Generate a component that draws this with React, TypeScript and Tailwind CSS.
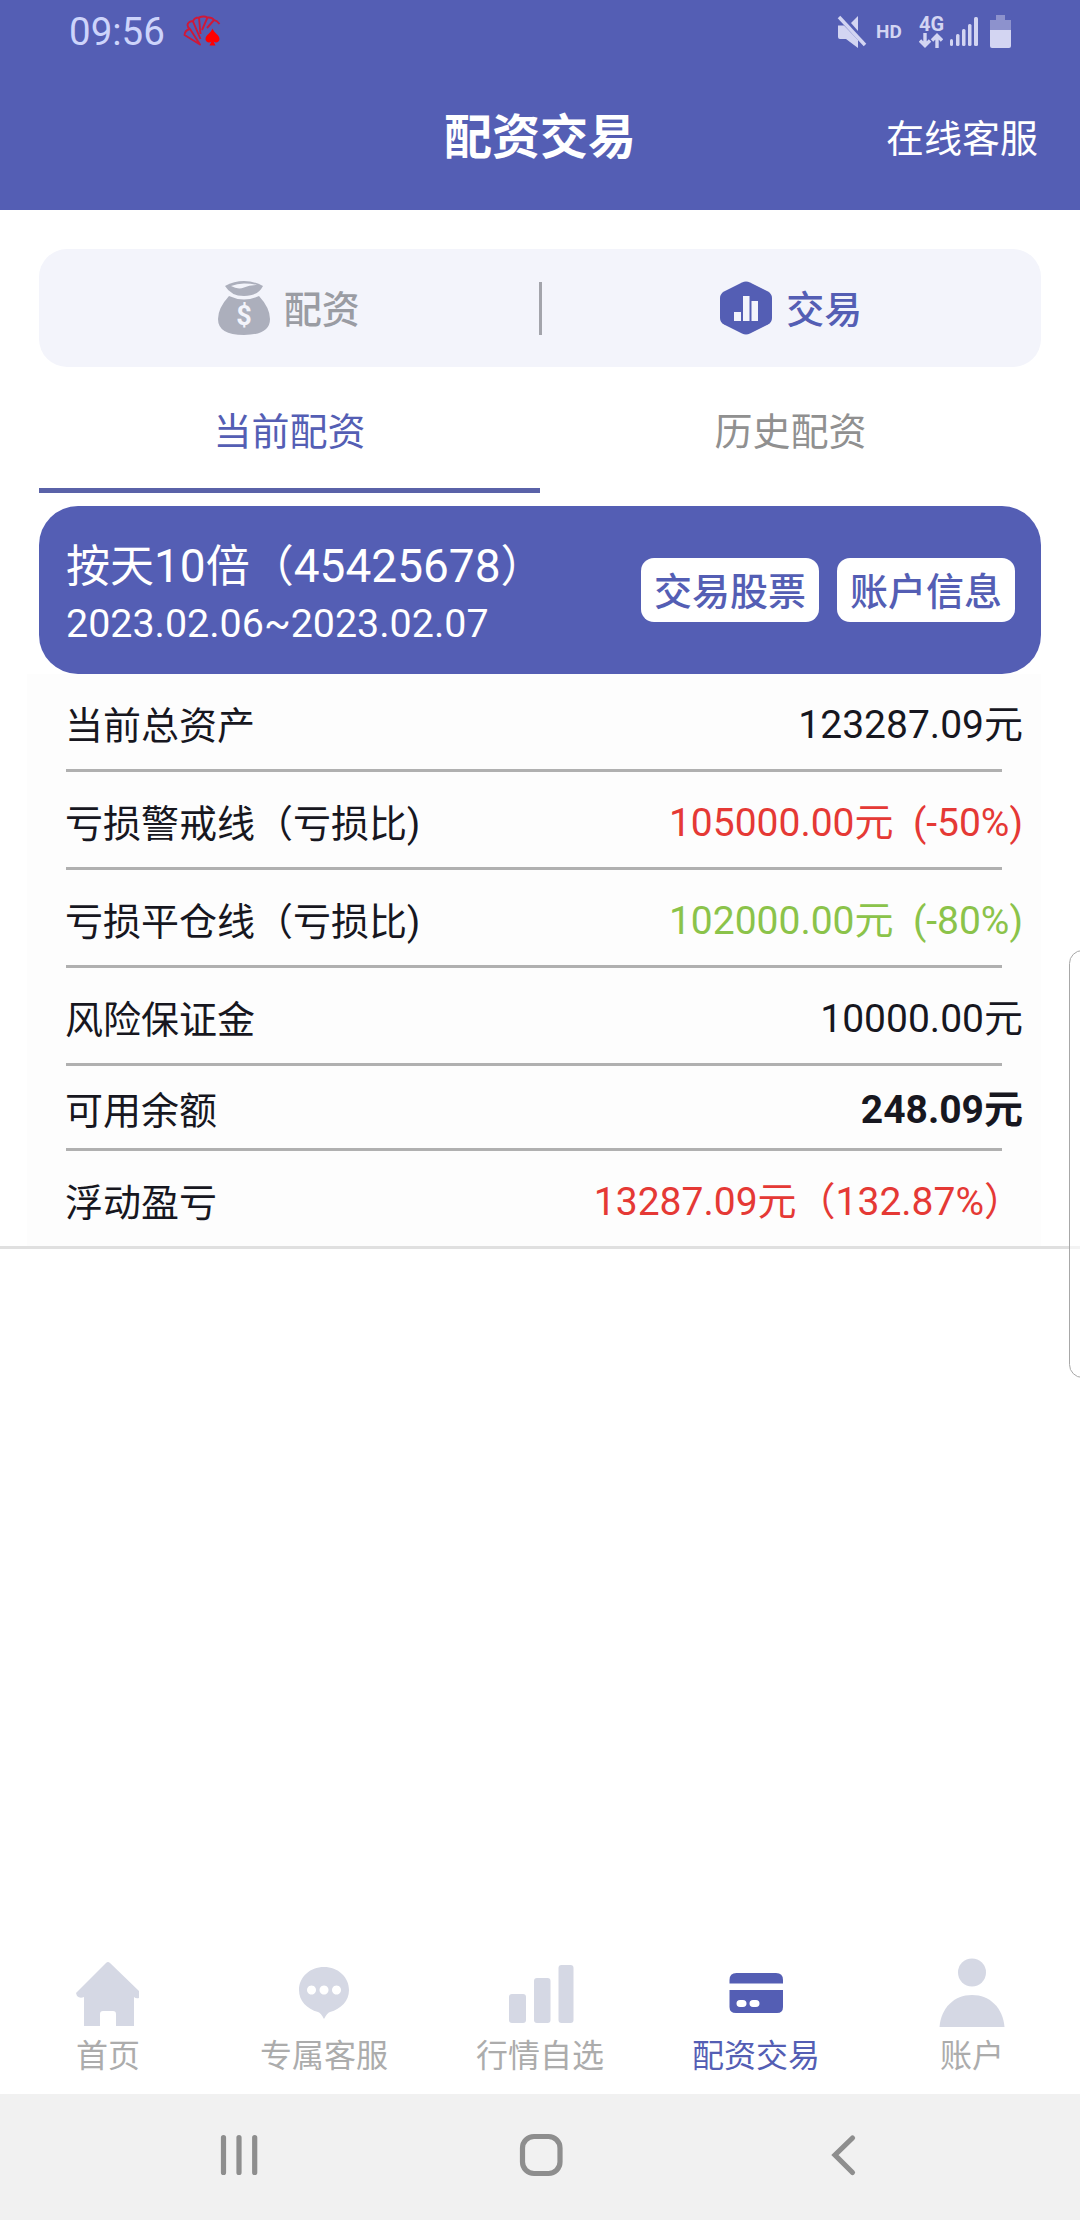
import React from "react";

type Row = { label: string; value: string; tone: string; height: string };

const rows: Row[] = [
  { label: "当前总资产", value: "123287.09元", tone: "text-[#17171f]", height: "h-[98px] pt-[5px]" },
  { label: "亏损警戒线（亏损比)", value: "105000.00元  (-50%)", tone: "text-[#e53935]", height: "h-[98px] pt-[5px]" },
  { label: "亏损平仓线（亏损比)", value: "102000.00元  (-80%)", tone: "text-[#8bc34a]", height: "h-[98px] pt-[5px]" },
  { label: "风险保证金", value: "10000.00元", tone: "text-[#17171f]", height: "h-[98px] pt-[5px]" },
  { label: "可用余额", value: "248.09元", tone: "text-[#17171f] font-bold", height: "h-[85px] pt-[4px]" },
  { label: "浮动盈亏", value: "13287.09元（132.87%）", tone: "text-[#e53935]", height: "h-[95px] pt-[8px]" },
];

function CardsIcon() {
  return (
    <svg width="38" height="32" viewBox="0 0 38 32" fill="none" stroke="#cf1838" strokeWidth="1.9" strokeLinejoin="round">
      <path d="M1.500 20 L17 29.500 L7 14 Q2 15 1.500 20Z M7 14 Q3.500 11.500 5 8.500 Q7 5.500 10 6.500 L17.500 24 M10 6.500 Q11 2.500 16 2.500 L17.500 19 M16 2.500 Q21 0.500 24.500 2.500 L19 15 M24.500 2.500 Q29 2 31 5 L24 13 M31 5 Q34 5.500 36.500 9" />
      <path d="M29.500 13.500 C31 18 36.500 20 36.500 24 C36.500 27.500 32.500 28.500 30.500 26.500 L32.500 30.500 H26.500 L28.500 26.500 C26.500 28.500 22.500 27.500 22.500 24 C22.500 20 28 18 29.500 13.500Z" fill="#f00" stroke="none" />
    </svg>
  );
}

function MuteIcon() {
  return (
    <svg width="30" height="33" viewBox="0 0 30 33" fill="#d3d5f2">
      <path d="M1 10.500 H7 L21 25 V33 L9 24 H3 Q1 24 1 22Z" />
      <path d="M21 1 V16 L14 8Z" />
      <path d="M2 2 L28 30" stroke="#d3d5f2" strokeWidth="3.5" />
    </svg>
  );
}

function StatusBar() {
  return (
    <div className="flex h-[62px] items-center justify-between pl-[69px] pr-[69px]">
      <div className="flex items-center">
        <span className="w-[114px] pt-[3px] text-[38.500px] leading-none text-[#cdd4fb]">09:56</span>
        <CardsIcon />
      </div>
      <div className="flex items-center">
        <MuteIcon />
        <span className="ml-[9px] w-[43px] text-[19px] font-bold leading-none text-[#d3d5f2]">HD</span>
        <div className="flex w-[31px] flex-col items-start">
          <span className="text-[20px] font-bold leading-[18px] text-[#d3d5f2]">4G</span>
          <svg width="24" height="15" viewBox="0 0 24 15" fill="none" stroke="#d3d5f2" strokeWidth="3.4">
            <path d="M6 0 V13 M1 7.500 L6 12.500 L11 7.500 M18 15 V2 M13 7.500 L18 2.500 L23 7.500" />
          </svg>
        </div>
        <svg width="29" height="30" viewBox="0 0 29 30" fill="#d3d5f2">
          <rect x="0" y="23" width="3" height="7" rx="1.5" />
          <rect x="6" y="18" width="3.5" height="12" rx="1.5" />
          <rect x="12" y="13" width="3.5" height="17" rx="1.5" />
          <rect x="18" y="8" width="3.5" height="22" rx="1.5" />
          <rect x="24" y="1" width="4" height="29" rx="1.5" />
        </svg>
        <svg className="ml-[11px]" width="21" height="33" viewBox="0 0 21 33">
          <path d="M6 0 H15 V5 H21 V15 H0 V5 H6Z" fill="#8d92cd" />
          <path d="M0 15 H21 V31 Q21 33 19 33 H2 Q0 33 0 31Z" fill="#d3d5f2" />
        </svg>
      </div>
    </div>
  );
}

function MoneyBagIcon() {
  return (
    <svg width="52" height="54" viewBox="0 0 52 54">
      <path d="M7 5 Q16 0 26 0 Q36 0 45 5 Q40 15 26 15 Q13 15 7 5Z" fill="#acafbc" />
      <path d="M13 5 Q19 2.500 26 2.500 Q34 2.500 39 4 Q31 4 26 6.500 Q20 9 13 5Z" fill="#f3f4fb" />
      <path d="M11 15 Q26 22 41 15 Q52 27 52 38 Q52 54 26 54 Q0 54 0 38 Q0 27 11 15Z" fill="#acafbc" />
      <text x="26" y="44" textAnchor="middle" fontSize="27" fontWeight="700" fontFamily="Roboto" fill="#f3f4fb">$</text>
    </svg>
  );
}

function HexChartIcon() {
  return (
    <svg width="52" height="54" viewBox="0 0 52 54">
      <path d="M22 1.500 Q26 -0.500 30 1.500 L48 10.500 Q52 13 52 17 V37 Q52 41 48 43.500 L30 52.500 Q26 54.500 22 52.500 L4 43.500 Q0 41 0 37 V17 Q0 13 4 10.500Z" fill="#545eb4" />
      <path d="M14 31 H21 V40 H14Z M23 15 H29.500 V40 H23Z M31.500 20 H38 V40 H31.500Z" fill="#f3f4fb" />
    </svg>
  );
}

function BottomItem({ label, active, children }: { label: string; active?: boolean; children: React.ReactNode }) {
  return (
    <div className="flex flex-1 flex-col items-center gap-[8px]">
      <svg width="76" height="76" viewBox="0 0 76 76" fill={active ? "#545eb4" : "#d5d8e4"}>
        {children}
      </svg>
      <span className={active ? "text-[32px] leading-[42px] text-[#545eb4]" : "text-[32px] leading-[42px] text-[#acacac]"}>{label}</span>
    </div>
  );
}

export default function App() {
  return (
    <div className="relative flex h-[2220px] w-[1080px] flex-col overflow-hidden bg-white font-[Roboto,'Noto_Sans_CJK_SC',sans-serif]">
      <header className="h-[210px] bg-[#545eb4] text-white">
        <StatusBar />
        <div className="grid h-[148px] grid-cols-[1fr_auto_1fr] items-center pr-[42px] pt-[4px]">
          <span />
          <h1 className="pl-[42px] text-[48px] font-bold leading-none">配资交易</h1>
          <span className="pt-px text-right text-[38px] leading-none">在线客服</span>
        </div>
      </header>

      <main className="flex-1">
        <div className="mx-[39px] mt-[39px] flex h-[118px] items-center rounded-[28px] bg-[#f3f4fb]">
          <div className="flex flex-1 items-center justify-center gap-[14px]">
            <MoneyBagIcon />
            <span className="pt-[4px] text-[38px] font-medium leading-none text-[#9a9ca3]">配资</span>
          </div>
          <div className="h-[53px] w-[3px] bg-[#a3a4ab]" />
          <div className="flex flex-1 items-center justify-center gap-[14px]">
            <HexChartIcon />
            <span className="pt-[4px] text-[38px] font-medium leading-none text-[#545eb4]">交易</span>
          </div>
        </div>

        <div className="mx-[39px] flex h-[126px] text-[38px] leading-none">
          <div className="flex flex-1 items-center justify-center border-b-[5px] border-[#5a62a8] pt-[9px] text-[#545eb4]">当前配资</div>
          <div className="flex flex-1 items-center justify-center border-b-[5px] border-transparent pt-[9px] text-[#909090]">历史配资</div>
        </div>

        <section className="mx-[39px] mt-[13px] flex h-[168px] items-center justify-between rounded-[39px] bg-[#545eb4] pl-[27px] pr-[26px] text-white">
          <div className="flex flex-col pt-[6px]">
            <span className="text-[44px] leading-[60px]">
              按天<span className="text-[46px]">10</span>倍（<span className="text-[46px]">45425678</span>）
            </span>
            <span className="text-[39.400px] leading-[54px]">2023.02.06~2023.02.07</span>
          </div>
          <div className="flex gap-[18px] text-[38px] font-medium leading-none text-[#545eb4]">
            <button className="h-16 w-[178px] rounded-[13px] bg-white pt-[4px]">交易股票</button>
            <button className="h-16 w-[178px] rounded-[13px] bg-white pt-[4px]">账户信息</button>
          </div>
        </section>

        <section className="border-b-[3px] border-[#e0e0e0]">
          {rows.map((r, i) => (
            <div key={r.label} className="ml-[27px] mr-[39px] bg-[#fdfdfd] pl-[39px]">
              <div className={`flex items-center justify-between whitespace-pre text-[38px] leading-none ${r.height}`}>
                <span className="-ml-px text-[#17171f]">{r.label}</span>
                <span className={`mr-[18px] text-[39px] ${r.tone}`}>{r.value}</span>
              </div>
              {i < rows.length - 1 && <div className="-mt-[3px] mr-[39px] h-[3px] bg-[#b0b0b0]" />}
            </div>
          ))}
        </section>
      </main>

      <nav className="flex h-[143px]">
        <BottomItem label="首页">
          <path d="M36 12 Q38 10 40 12 L69 40 V47 Q66 48 64 46 V75 H46 V63 Q46 60 43 60 H33 Q30 60 30 63 V75 H14 V46 Q10 48 7 45 L6 42Z" />
        </BottomItem>
        <BottomItem label="专属客服">
          <path fillRule="evenodd" d="M38 16 C52 16 63 26 63 39 C63 50 55 58 44 61 Q41 62 38 68 Q35 62 32 61 C21 58 13 50 13 39 C13 26 24 16 38 16Z M25.500 34.500 a4.500 4.500 0 1 0 .01 0Z M38 34.500 a4.500 4.500 0 1 0 .01 0Z M50.500 34.500 a4.500 4.500 0 1 0 .01 0Z" />
        </BottomItem>
        <BottomItem label="行情自选">
          <rect x="7" y="43" width="17" height="29" rx="3" />
          <rect x="32" y="27" width="16.500" height="45" rx="3" />
          <rect x="56.500" y="14" width="15" height="58" rx="3" />
        </BottomItem>
        <BottomItem label="配资交易" active>
          <path d="M11.500 32.500 V29 Q11.500 22 18.500 22 H58 Q65 22 65 29 V32.500Z" />
          <path fillRule="evenodd" d="M11.500 39 H65 V56 Q65 62 59 62 H18 Q11.500 62 11.500 56Z M22 49 a3.500 3.500 0 0 0 0 7 h3 a3.500 3.500 0 0 0 0 -7Z M35 49 a3.500 3.500 0 0 0 0 7 h3 a3.500 3.500 0 0 0 0 -7Z" />
        </BottomItem>
        <BottomItem label="账户">
          <circle cx="38" cy="21.500" r="14" />
          <path d="M5.500 76 C7 57 20 44 38 44 C56 44 69 57 70.500 76Z" />
        </BottomItem>
      </nav>

      <footer className="flex h-[126px] items-center bg-[#f1f1f1]">
        <svg width="1080" height="126" viewBox="0 0 1080 126" fill="none" stroke="#8e8e8e" strokeWidth="5.200" strokeLinecap="round">
          <path d="M223.500 43.500 V78.500 M239 43.500 V78.500 M254.700 43.500 V78.500" />
          <rect x="522.500" y="42.500" width="37.500" height="37" rx="11.500" />
          <path d="M852.500 44 L835 61 L852.500 78.500" />
        </svg>
      </footer>

      <div className="absolute -right-4 top-[950px] h-[428px] w-[27px] rounded-[16px] border border-[#a8a8a8] bg-white/60" />
    </div>
  );
}
